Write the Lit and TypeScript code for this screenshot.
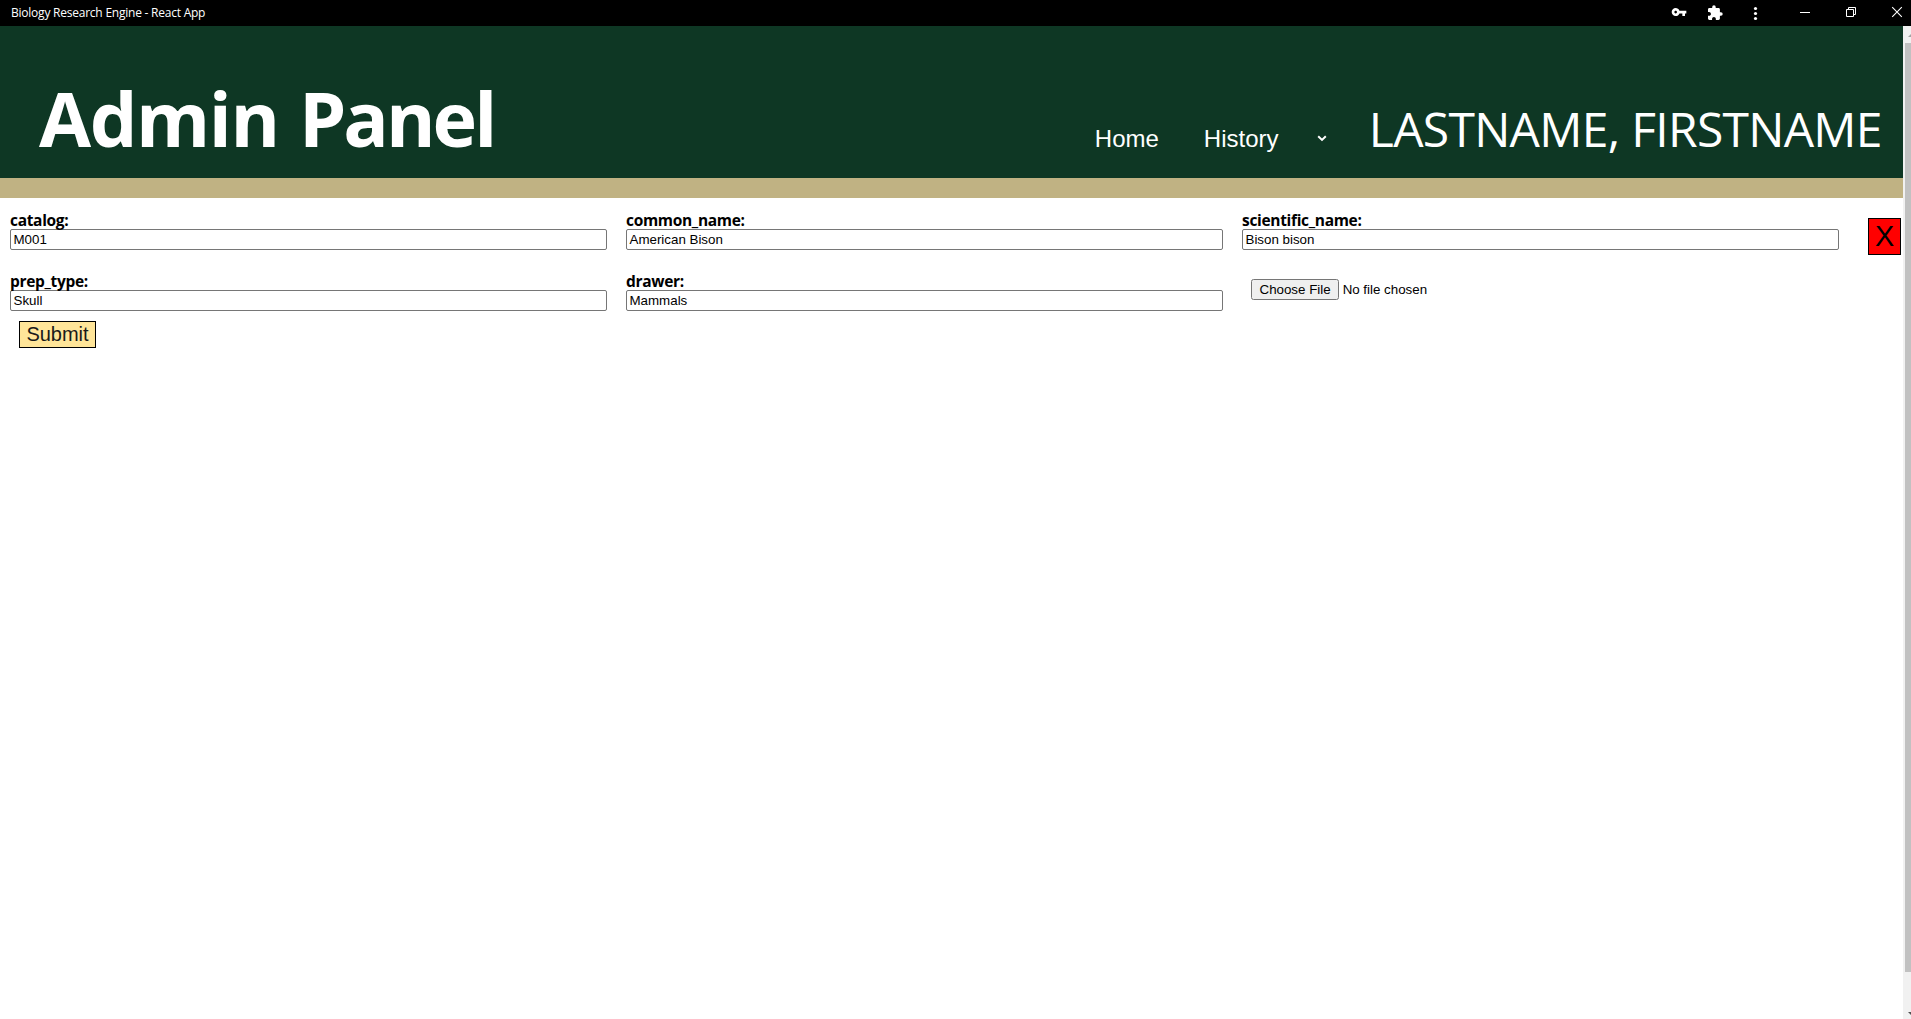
import { LitElement, html, css } from "lit";
import { customElement } from "lit/decorators.js";

@customElement("window-bar")
class WindowBar extends LitElement {
  static styles = css`
    :host { display: flex; height: 26px; background: #000; color: #fff; align-items: center; justify-content: space-between; }
    .title { font: 12px/16px "Open Sans", "Noto Sans", sans-serif; margin-left: 11px; letter-spacing: -0.23px; white-space: nowrap; }
    .icons { display: flex; height: 26px; }
    svg { display: block; width: 240px; height: 26px; }
  `;
  render() {
    return html`
      <span class="title">Biology Research Engine - React App</span>
      <div class="icons">
        <svg viewBox="0 0 240 26" fill="none" stroke="#fff">
          <g transform="translate(0 4.1) scale(.667)" stroke="none" fill="#fff">
            <path d="M12.65 10C11.83 7.67 9.61 6 7 6c-3.31 0-6 2.69-6 6s2.69 6 6 6c2.61 0 4.83-1.67 5.65-4H17v4h4v-4h2v-4H12.65zM7 14c-1.100 0-2-.9-2-2s.9-2 2-2 2 .9 2 2-.9 2-2 2z"/>
          </g>
          <g transform="translate(35.600 4.500) scale(.700)" stroke="none" fill="#fff">
            <path d="M20.500 11H19V7c0-1.100-.9-2-2-2h-4V3.500a2.500 2.500 0 0 0-5 0V5H4c-1.100 0-1.990.9-1.990 2v3.800H3.500c1.490 0 2.700 1.210 2.700 2.700s-1.210 2.700-2.700 2.700H2V20c0 1.100.9 2 2 2h3.800v-1.500c0-1.490 1.210-2.700 2.700-2.700s2.700 1.210 2.700 2.700V22H17c1.100 0 2-.9 2-2v-4h1.500a2.500 2.500 0 0 0 0-5z"/>
          </g>
          <g fill="#fff" stroke="none"><circle cx="84.500" cy="8.500" r="1.600"/><circle cx="84.500" cy="13.500" r="1.600"/><circle cx="84.500" cy="18.500" r="1.600"/></g>
          <path d="M129 12.500h10"/>
          <path d="M175.500 9.500h7v7h-7zM177.500 9.500v-2h7v7h-2"/>
          <path d="M221.200 7.200l9.600 9.600M230.800 7.200l-9.600 9.600" stroke-width="1.100"/>
        </svg>
      </div>
    `;
  }
}

@customElement("page-header")
class PageHeader extends LitElement {
  static styles = css`
    :host { display: flex; box-sizing: border-box; height: 172px; background: #0e3724; border-bottom: 20px solid #c0b283; color: #fff; padding: 0 21.200px 0 39px; align-items: baseline; }
    h1 { margin: 42px auto 0 0; font: bold 75.500px/100px "Open Sans", "Noto Sans", sans-serif; white-space: nowrap; letter-spacing: -1.400px; }
    .second { letter-spacing: -3px; margin-left: 2px; }
    .link { font: 24px/28px "Liberation Sans", Arial, sans-serif; margin-right: 45px; }
    .history { margin-right: 38.500px; }
    .arrow { width: 10px; height: 7px; margin-right: 41.800px; align-self: flex-start; margin-top: 109px; }
    .user { font: 48px/64px "Open Sans", "Noto Sans", sans-serif; white-space: nowrap; letter-spacing: -0.700px; }
  `;
  render() {
    return html`
      <h1>Admin <span class="second">Panel</span></h1>
      <span class="link">Home</span>
      <span class="link history">History</span>
      <svg class="arrow" viewBox="0 0 10 7" fill="none" stroke="#fff" stroke-width="2"><path d="M1.200 1.200l3.800 3.700 3.800-3.700"/></svg>
      <span class="user">LASTNAME, FIRSTNAME</span>
    `;
  }
}

@customElement("specimen-form")
class SpecimenForm extends LitElement {
  static styles = css`
    :host { display: block; flex: 1; }
    .row { display: grid; grid-template-columns: 597px 597px 597px 1fr; column-gap: 19px; padding-left: 10px; height: 61px; box-sizing: border-box; }
    .row.first { padding-top: 11px; height: 72px; }
    label { display: block; font: bold 15.500px/22px "Open Sans", "Noto Sans", sans-serif; height: 20px; white-space: nowrap; color: #000; letter-spacing: -0.320px; }
    .text { display: block; box-sizing: border-box; width: 597px; height: 21px; margin: 0; padding: 1px 2px; border: 1px solid #767676; border-radius: 2px; background: #fff; color: #000; font: 13.333px "Liberation Sans", Arial, sans-serif; text-indent: 0.500px; }
    .remove { box-sizing: border-box; width: 33px; height: 37px; margin: 9px 0 0 10px; padding: 0; border: 1px solid #000; background: #f00; color: #000; font: 28.800px/33px "Liberation Sans", Arial, sans-serif; }
    .file { margin: 9px 0 0 9px; align-self: start; font: 13.333px "Liberation Sans", Arial, sans-serif; color: #000; height: 21px; }
    .file::file-selector-button { padding: 1px 6.500px; margin-right: 3.500px; }
    .submit { display: block; box-sizing: border-box; width: 77px; height: 27px; margin: -10px 0 0 19px; padding: 0; border: 1px solid #000; background: #ffe599; color: #1a1a1a; font: 20px/23px "Liberation Sans", Arial, sans-serif; }
    .first .remove { align-self: start; }
  `;
  field(name: string, value: string) {
    return html`<div><label>${name}:</label><input class="text" aria-label=${name} .value=${value} /></div>`;
  }
  render() {
    return html`
      <div class="row first">
        ${this.field("catalog", "M001")} ${this.field("common_name", "American Bison")} ${this.field("scientific_name", "Bison bison")}
        <button class="remove">X</button>
      </div>
      <div class="row">
        ${this.field("prep_type", "Skull")} ${this.field("drawer", "Mammals")}
        <input class="file" type="file" />
      </div>
      <button class="submit">Submit</button>
    `;
  }
}

@customElement("app-root")
class AppRoot extends LitElement {
  static styles = css`
    :host { display: flex; flex-direction: column; width: 1911px; height: 1019px; overflow: hidden; background: #fff; }
    .body { display: flex; flex: 1; min-height: 0; }
    main { flex: 1; display: flex; flex-direction: column; min-width: 0; }
    .scroll { width: 8px; background: #f1f1f1; display: flex; flex-direction: column; overflow: hidden; }
    .thumb { flex: 1; margin-left: 2px; background: #c1c1c1; }
    .cap { display: block; width: 8px; height: 17px; flex: none; }
    .cap.down { height: 47px; }
  `;
  render() {
    return html`
      <window-bar></window-bar>
      <div class="body">
        <main><page-header></page-header><specimen-form></specimen-form></main>
        <div class="scroll">
          <svg class="cap" viewBox="0 0 8 17"><path d="M5 11l4-4v4z" fill="#a3a3a3"/></svg>
          <div class="thumb"></div>
          <svg class="cap down" viewBox="0 0 8 47"><path d="M5 40h4v4z" fill="#505050"/></svg>
        </div>
      </div>
    `;
  }
}
